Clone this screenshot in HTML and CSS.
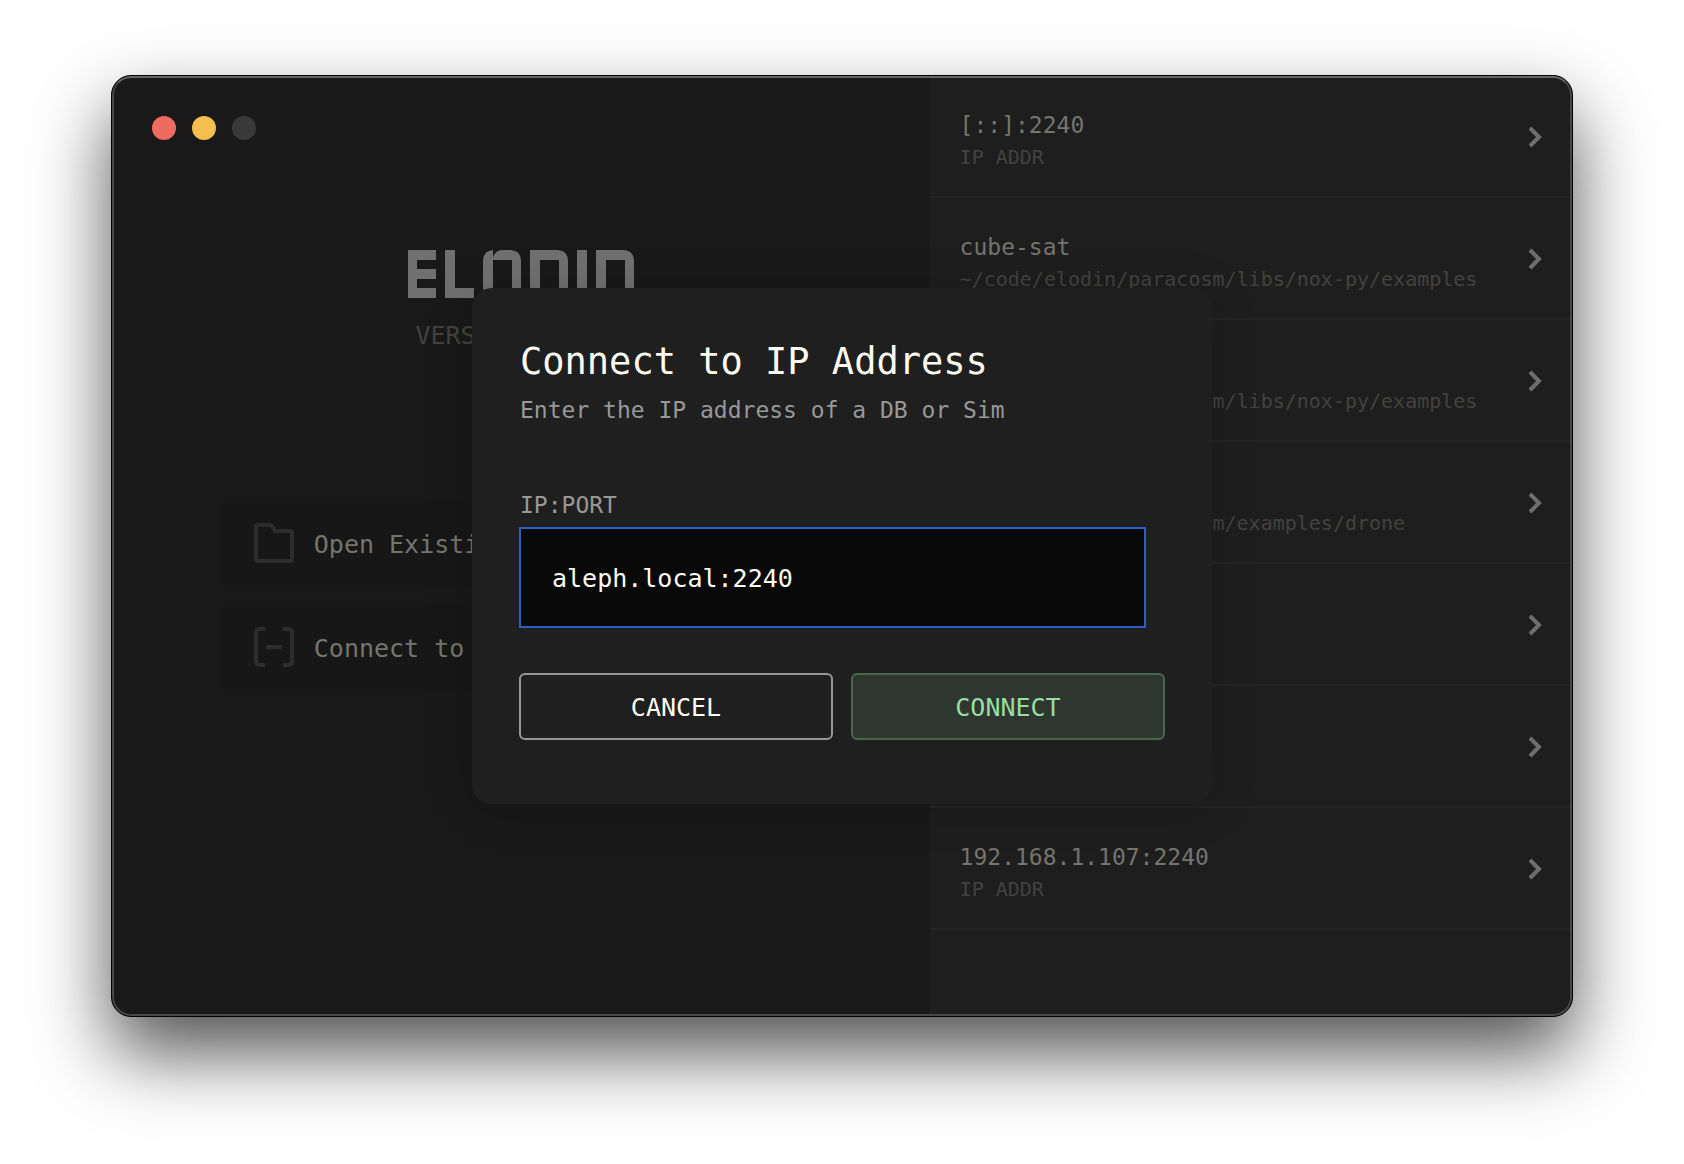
FILE: index.html
```html
<!DOCTYPE html>
<html lang="en">
<head>
  <meta charset="utf-8">
  <meta name="viewport" content="width=device-width, initial-scale=1">
  <title>Elodin</title>
  <link rel="stylesheet" href="styles.css">
</head>
<body>
  <svg class="sprite" aria-hidden="true">
    <symbol id="chevron" viewBox="0 0 14 22">
      <path d="M2 2l9 9-9 9" fill="none" stroke="currentColor" stroke-width="4"/>
    </symbol>
  </svg>
  <div class="window">
    <main class="start">
      <div class="lights">
        <button class="light light-close" aria-label="Close"></button>
        <button class="light light-minimize" aria-label="Minimize"></button>
        <button class="light light-zoom" aria-label="Zoom" disabled></button>
      </div>
      <svg class="logo" viewBox="0 0 226 48" role="img" aria-label="Elodin">
        <path d="M0 0h28v10H9v9h19v10H9v9h19v10H0z"/>
        <path d="M37 0h10v38h19v10H37z"/>
        <path fill-rule="evenodd" d="M85 0v8q2-8 9-8h9q10 1 10 11v27q0 10-10 10H85q-10 0-10-10V11Q75 1 85 0zM85 10v28h19V10z"/>
        <path fill-rule="evenodd" d="M122 0h28q10 1 10 11v27q0 10-10 10h-28zM132 10v28h19V10z"/>
        <path d="M169 0h10v48h-10z"/>
        <path d="M188 0h28q10 1 10 11v37h-9V10h-19v38h-10z"/>
      </svg>
      <p class="version">VERSION 0.13.2</p>
      <div class="actions">
        <button class="action">
          <svg class="action-icon" viewBox="0 0 40 40" aria-hidden="true">
            <path d="M4 2h12.500q1 0 1.500 1l3 5H36q2 0 2 2v26q0 2-2 2H4q-2 0-2-2V4q0-2 2-2z"/>
          </svg>
          <span class="action-label">Open Existing</span>
        </button>
        <button class="action">
          <svg class="action-icon" viewBox="0 0 40 40" aria-hidden="true">
            <path d="M11 2H6Q2 2 2 6v28q0 4 4 4h5M29 2h5q4 0 4 4v28q0 4-4 4h-5M12 20h16"/>
          </svg>
          <span class="action-label">Connect to IP</span>
        </button>
      </div>
    </main>
    <nav class="recents" aria-label="Recent">
      <a class="recent" href="#"><span class="recent-text"><span class="recent-name">[::]:2240</span><span class="recent-path">IP ADDR</span></span><svg class="chevron" aria-hidden="true"><use href="#chevron"/></svg></a>
      <a class="recent" href="#"><span class="recent-text"><span class="recent-name">cube-sat</span><span class="recent-path">~/code/elodin/paracosm/libs/nox-py/examples</span></span><svg class="chevron" aria-hidden="true"><use href="#chevron"/></svg></a>
      <a class="recent" href="#"><span class="recent-text"><span class="recent-name">rocket</span><span class="recent-path">~/code/elodin/paracosm/libs/nox-py/examples</span></span><svg class="chevron" aria-hidden="true"><use href="#chevron"/></svg></a>
      <a class="recent" href="#"><span class="recent-text"><span class="recent-name">drone</span><span class="recent-path">~/code/elodin/paracosm/examples/drone</span></span><svg class="chevron" aria-hidden="true"><use href="#chevron"/></svg></a>
      <a class="recent" href="#"><span class="recent-text"><span class="recent-name">127.0.0.1:2240</span><span class="recent-path">IP ADDR</span></span><svg class="chevron" aria-hidden="true"><use href="#chevron"/></svg></a>
      <a class="recent" href="#"><span class="recent-text"><span class="recent-name">0.0.0.0:2240</span><span class="recent-path">IP ADDR</span></span><svg class="chevron" aria-hidden="true"><use href="#chevron"/></svg></a>
      <a class="recent" href="#"><span class="recent-text"><span class="recent-name">192.168.1.107:2240</span><span class="recent-path">IP ADDR</span></span><svg class="chevron" aria-hidden="true"><use href="#chevron"/></svg></a>
    </nav>
    <form class="dialog" role="dialog" aria-labelledby="dialog-title">
      <h1 class="dialog-title" id="dialog-title">Connect to IP Address</h1>
      <p class="dialog-hint">Enter the IP address of a DB or Sim</p>
      <label class="field-label" for="address">IP:PORT</label>
      <input class="field" id="address" type="text" value="aleph.local:2240" spellcheck="false">
      <div class="dialog-buttons">
        <button class="button" type="button">CANCEL</button>
        <button class="button button-primary" type="submit">CONNECT</button>
      </div>
    </form>
  </div>
</body>
</html>
```
FILE: styles.css
```css
* {
  box-sizing: border-box;
}

body {
  display: flex;
  min-height: 100vh;
  margin: 0;
  padding: 75px 111px 147px;
  background: #fff;
  font-family: "DejaVu Sans Mono", "Liberation Mono", monospace;
  font-size: 25px;
  line-height: 32px;
}

button,
input {
  margin: 0;
  font: inherit;
}

h1,
p {
  margin: 0;
}

.sprite {
  position: absolute;
  width: 0;
  height: 0;
}

/* Window frame */
.window {
  position: relative;
  display: grid;
  flex: 1;
  grid-template-columns: 1fr 44%;
  border: 1px solid #000;
  border-radius: 20px;
  overflow: hidden;
  background: #191919;
  box-shadow: 0 36px 76px rgba(0, 0, 0, 0.68);
}

.window::after {
  position: absolute;
  inset: 0;
  border: 2px solid #474747;
  border-top-color: #666;
  border-radius: 19px;
  content: "";
  pointer-events: none;
}

/* Start panel */
.start {
  display: flex;
  flex-direction: column;
  align-items: center;
  padding: 40px;
}

.lights {
  display: flex;
  gap: 16px;
  align-self: flex-start;
}

.light {
  width: 24px;
  height: 24px;
  padding: 0;
  border: 0;
  border-radius: 50%;
}

.light-close {
  background: #ee6b5f;
}

.light-minimize {
  background: #f5bf4f;
}

.light-zoom {
  background: #393939;
}

.logo {
  width: 226px;
  height: 48px;
  margin-top: 110px;
  fill: #707070;
}

.version {
  margin-top: 22px;
  color: #43423e;
}

.actions {
  display: flex;
  flex-direction: column;
  gap: 20px;
  width: 596px;
  margin-top: 149px;
}

.action {
  display: flex;
  gap: 20px;
  align-items: center;
  height: 84px;
  padding: 0 31px;
  border: 0;
  border-radius: 4px;
  background: #171717;
  color: #75746f;
}

.action-label {
  padding-top: 4px;
}

.action-icon {
  width: 40px;
  height: 40px;
  fill: none;
  stroke: #2d2d2d;
  stroke-width: 4px;
}

/* Recent items */
.recents {
  background: #1e1e1e;
}

.recent {
  display: flex;
  align-items: center;
  justify-content: space-between;
  height: 122px;
  padding: 10px 30px 0;
  border-bottom: 2px solid #242424;
  color: #75746f;
  font-size: 23px;
  text-decoration: none;
}

.recent-text {
  display: flex;
  flex-direction: column;
}

.recent-path {
  color: #43423e;
  font-size: 20px;
}

.chevron {
  width: 14px;
  height: 22px;
  margin-bottom: 8px;
  color: #6e6e6e;
}

/* Connect dialog */
.dialog {
  position: absolute;
  top: 50%;
  left: 50%;
  display: flex;
  flex-direction: column;
  width: 740px;
  padding: 50px 47px 64px;
  border-radius: 20px;
  background: #1f1f1f;
  box-shadow: 0 4px 48px rgba(0, 0, 0, 0.16);
  color: #989898;
  font-size: 23px;
  transform: translate(-50%, -50%);
}

.dialog-title,
.dialog-hint,
.field-label {
  padding-left: 1px;
}

.dialog-title {
  margin-bottom: 8px;
  color: #fffcf2;
  font-size: 37px;
  font-weight: 400;
  line-height: 48px;
}

.field-label {
  margin: 63px 0 6px;
}

.field {
  height: 101px;
  margin-right: 19px;
  padding: 2px 31px 0;
  border: 2px solid #2a5fc9;
  outline: 0;
  background: #090909;
  color: #fffcf2;
  font-size: 25px;
}

.dialog-buttons {
  display: grid;
  grid-template-columns: 1fr 1fr;
  gap: 18px;
  margin-top: 45px;
  font-size: 25px;
}

.button {
  height: 67px;
  padding: 2px 0 0;
  border: 2px solid #979797;
  border-radius: 6px;
  background: transparent;
  color: #fffcf2;
}

.button-primary {
  border-color: #48664c;
  background: #2d372f;
  color: #98dca0;
}
```
